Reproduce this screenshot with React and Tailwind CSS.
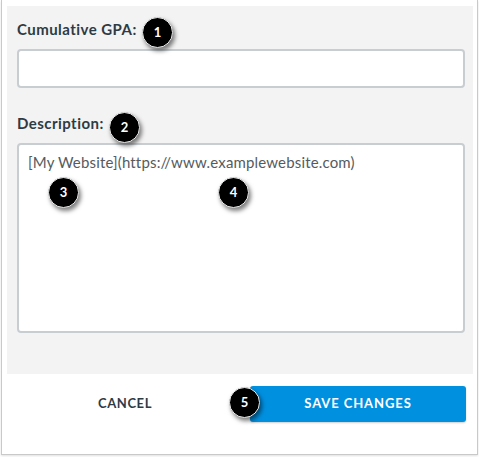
function Badge({ n, className }) {
  return (
    <span
      className={
        "absolute flex h-[31px] w-[31px] items-center justify-center rounded-full border border-[#e8e8e8] bg-black text-[13px] font-bold text-white shadow-[2px_3px_4px_rgba(0,0,0,0.5)] " +
        className
      }
    >
      {n}
    </span>
  );
}

export default function App() {
  return (
    <div className="relative h-[457px] w-[479px] bg-white font-['Lato','Noto_Sans',sans-serif]">
      <div className="ml-[1px] flex h-[455px] w-[477px] flex-col border-x border-b border-[#c9c9c9] pl-[5px] pr-[4px] pt-[6px] shadow-[0_1px_2px_rgba(0,0,0,0.12)]">
        <div className="flex flex-col bg-[#f3f3f3] pb-[41px] pl-[10px] pr-[8px] pt-[13px]">
          <label className="text-[15px] font-bold leading-5 tracking-[0.45px] text-[#2d3b45]">Cumulative GPA:</label>
          <input
            type="text"
            className="mt-[10px] h-[39px] rounded-[4px] border-2 border-[#c7cdd1] bg-white px-2"
          />
          <label className="mt-[25px] text-[15px] font-bold leading-5 tracking-[0.45px] text-[#2d3b45]">Description:</label>
          <div className="mt-[10px] h-[190px] rounded-[4px] border-2 border-[#c7cdd1] bg-white px-[9px] pt-[6px] text-[15px] tracking-[0.16px] text-[#555b60]">
            [My Website](https://www.examplewebsite.com)
          </div>
        </div>
        <div className="grid grid-cols-2 gap-[17px] pl-[10px] pr-[7px] pt-[12px]">
          <button className="h-[36px] text-[13px] font-bold tracking-[0.6px] text-[#2d3b45]">CANCEL</button>
          <button className="h-[36px] rounded-[3px] bg-[#0090e0] text-[13px] font-bold tracking-[0.9px] text-white shadow-[0_1px_2px_rgba(0,0,0,0.2)]">
            SAVE CHANGES
          </button>
        </div>
      </div>
      <Badge n="1" className="left-[142px] top-[17px]" />
      <Badge n="2" className="left-[109px] top-[112px]" />
      <Badge n="3" className="left-[48px] top-[177px]" />
      <Badge n="4" className="left-[218px] top-[177px]" />
      <Badge n="5" className="left-[229px] top-[387px]" />
    </div>
  );
}
